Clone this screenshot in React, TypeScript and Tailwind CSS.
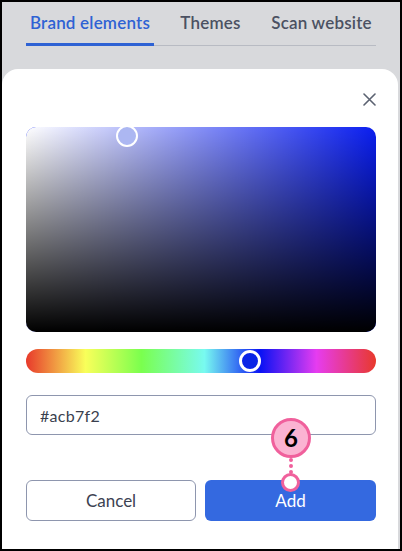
import { useState } from "react";

const TABS = [
  { label: "Brand elements", width: "w-[128px]" },
  { label: "Themes", width: "w-[113px]" },
  { label: "Scan website", width: "w-[109px]" },
];

export default function App() {
  const [active, setActive] = useState(0);
  const [hex, setHex] = useState("#acb7f2");

  return (
    <div className="relative w-[402px] h-[551px] overflow-hidden border-2 border-black bg-[#d8d9dc] font-['Lato',sans-serif] flex flex-col">
      {/* tabs */}
      <div className="mx-[24px] flex border-b border-[#b8bbc3]">
        {TABS.map((t, i) => (
          <button
            key={t.label}
            onClick={() => setActive(i)}
            className={
              "h-[44px] -mb-px pt-px text-[17px] font-semibold tracking-[0.2px] " +
              t.width +
              (active === i
                ? " text-[#2e62d4] border-b-[3px] border-[#2e62d4]"
                : " text-[#4b5162] border-b-[3px] border-transparent")
            }
          >
            {t.label}
          </button>
        ))}
      </div>

      {/* modal */}
      <div className="mt-[23px] mr-[2px] flex-1 rounded-t-[16px] bg-white pl-[24px] pr-[22px]">
        <div className="flex h-[58px] items-start justify-end pt-[24px]">
          <button className="text-[#5b6271]">
            <svg width="13" height="13" viewBox="0 0 13 13" fill="none" stroke="currentColor" strokeWidth="1.6" strokeLinecap="round">
              <path d="M1 1l11 11M12 1L1 12" />
            </svg>
          </button>
        </div>

        {/* saturation / value area */}
        <div className="relative h-[205px] w-[350px] rounded-[10px] bg-[#0a1ef0]">
          <div className="absolute inset-0 rounded-[10px] bg-[linear-gradient(to_right,#ffffff,rgba(255,255,255,0))]" />
          <div className="absolute inset-0 rounded-[10px] bg-[linear-gradient(to_top,#000000,rgba(0,0,0,0))]" />
          <div className="absolute left-[90px] top-[-2px] h-[22px] w-[22px] rounded-full border-2 border-white bg-[#acb7f2]" />
        </div>

        {/* hue slider */}
        <div className="relative mt-[17px] h-[24px] w-[350px] rounded-full bg-[linear-gradient(to_right,#e8392b_0%,#f9ff5a_17%,#7aff4e_33%,#78faf0_51%,#0a12f4_67%,#e63cf0_83%,#e8392b_100%)]">
          <div className="absolute left-[213px] top-[1px] h-[22px] w-[22px] rounded-full border-[3px] border-white bg-[#0a24e6]" />
        </div>

        {/* hex input */}
        <input
          value={hex}
          onChange={(e) => setHex(e.target.value)}
          className="mt-[22px] h-[40px] w-[350px] rounded-[6px] border border-[#8e96ae] px-[13px] text-[16px] tracking-[0.3px] text-[#3a3f4e] outline-none"
        />

        {/* actions */}
        <div className="mt-[45px] flex w-[350px] gap-[9px]">
          <button className="h-[41px] w-[170px] rounded-[6px] border border-[#8e96ae] bg-white text-[17px] text-[#3c4252]">
            Cancel
          </button>
          <button className="h-[41px] flex-1 rounded-[6px] bg-[#3469e0] text-[17px] text-white">
            Add
          </button>
        </div>
      </div>

      {/* step marker */}
      <div className="absolute left-[269px] top-[416px] flex h-[40px] w-[40px] items-center justify-center rounded-full border-[3px] border-[#f0609c] bg-[#fbb3d2] text-[24px] font-bold leading-none text-black">
        6
      </div>
      <div className="absolute left-[287px] top-[456px] h-[16px] w-0 border-l-[4px] border-dotted border-[#f0609c]" />
      <div className="absolute left-[279px] top-[471px] h-[19px] w-[19px] rounded-full border-[3px] border-[#f0609c] bg-white" />
    </div>
  );
}
